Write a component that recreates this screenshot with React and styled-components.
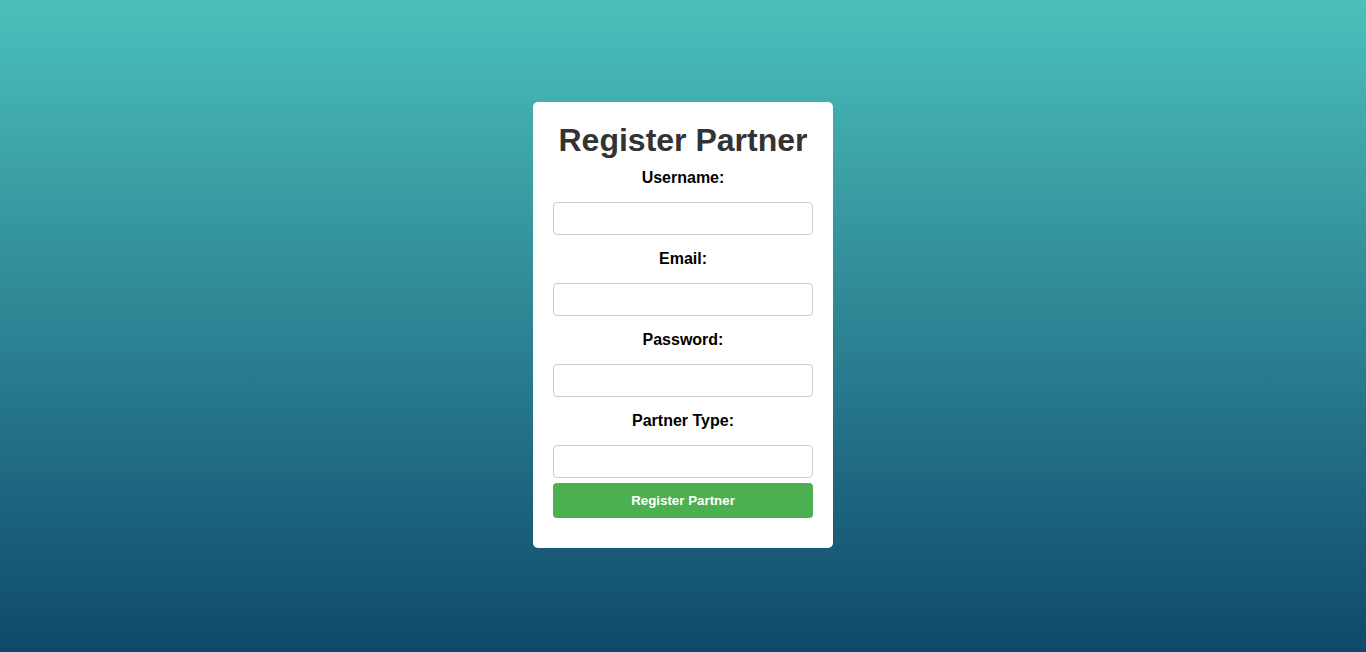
import React from 'react';
import styled, { createGlobalStyle } from 'styled-components';

const GlobalStyle = createGlobalStyle`
  html, body {
    margin: 0;
    padding: 0;
    height: 100%;
  }
  body {
    font-family: 'Liberation Sans', Arial, sans-serif;
  }
  #root {
    height: 100%;
  }
`;

const Page = styled.div`
  box-sizing: border-box;
  height: 100vh;
  padding-bottom: 2px;
  display: flex;
  align-items: center;
  justify-content: center;
  background: linear-gradient(to bottom, #4bc0bb, #0f486c);
`;

const Card = styled.div`
  width: 300px;
  box-sizing: border-box;
  padding: 20px 20px 30px;
  background-color: #fff;
  border-radius: 5px;
  text-align: center;
`;

const Title = styled.h2`
  margin: 0 0 10px;
  font-size: 32px;
  font-weight: bold;
  color: #333;
  line-height: 37px;
`;

const Form = styled.form`
  display: flex;
  flex-direction: column;
`;

const Field = styled.div`
  display: flex;
  flex-direction: column;
  gap: 15px;
  margin-bottom: 15px;

  &:last-of-type {
    margin-bottom: 5px;
  }
`;

const Label = styled.label`
  font-size: 16px;
  font-weight: bold;
  color: #000;
  line-height: 18px;
`;

const Input = styled.input`
  box-sizing: border-box;
  width: 100%;
  height: 33px;
  padding: 6px 8px;
  border: 1px solid #ccc;
  border-radius: 4px;
  font-size: 14px;
  font-family: inherit;
  outline: none;
`;

const Button = styled.button`
  height: 35px;
  border: none;
  border-radius: 4px;
  background-color: #4caf50;
  color: #fff;
  font-size: 13.33px;
  font-weight: bold;
  font-family: inherit;
  cursor: pointer;
`;

const fields = [
  { id: 'username', label: 'Username:', type: 'text' },
  { id: 'email', label: 'Email:', type: 'email' },
  { id: 'password', label: 'Password:', type: 'password' },
  { id: 'partnerType', label: 'Partner Type:', type: 'text' },
];

const App = () => {
  return (
    <>
      <GlobalStyle />
      <Page>
        <Card>
          <Title>Register Partner</Title>
          <Form onSubmit={(e) => e.preventDefault()}>
            {fields.map((field) => (
              <Field key={field.id}>
                <Label htmlFor={field.id}>{field.label}</Label>
                <Input id={field.id} type={field.type} />
              </Field>
            ))}
            <Button type="submit">Register Partner</Button>
          </Form>
        </Card>
      </Page>
    </>
  );
};

export default App;
